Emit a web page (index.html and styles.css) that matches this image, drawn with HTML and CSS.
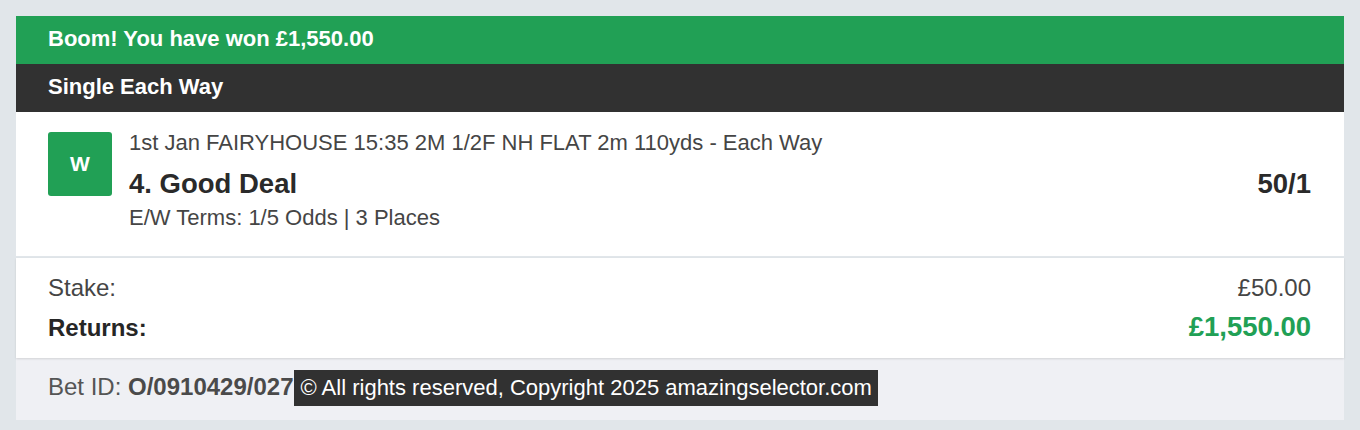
FILE: index.html
```html
<!DOCTYPE html>
<html lang="en">
<head>
<meta charset="utf-8">
<title>Bet receipt</title>
<link rel="stylesheet" href="styles.css">
</head>
<body>
<div class="card">
  <div class="banner">Boom! You have won £1,550.00</div>
  <div class="bet-type">Single Each Way</div>
  <div class="selection">
    <div class="badge">W</div>
    <div class="info">
      <div class="meta">1st Jan FAIRYHOUSE 15:35 2M 1/2F NH FLAT 2m 110yds - Each Way</div>
      <div class="name-row">
        <span class="name">4. Good Deal</span>
        <span class="odds">50/1</span>
      </div>
      <div class="terms">E/W Terms: 1/5 Odds | 3 Places</div>
    </div>
  </div>
  <div class="totals">
    <div class="row stake"><span>Stake:</span><span>£50.00</span></div>
    <div class="row returns"><span class="label">Returns:</span><span class="value">£1,550.00</span></div>
  </div>
  <div class="footer">
    <span class="bet-id">Bet ID: <b>O/0910429/027</b></span><span class="copyright">© All rights reserved, Copyright 2025 amazingselector.com</span>
  </div>
</div>
</body>
</html>
```
FILE: styles.css
```css
html, body {
  margin: 0;
  padding: 0;
}
body {
  background: #e1e6ea;
  padding: 16px;
  font-family: "Liberation Sans", Arial, sans-serif;
  color: #444;
}
.card {
  display: flex;
  flex-direction: column;
  width: 1328px;
}
.banner, .bet-type {
  height: 48px;
  box-sizing: border-box;
  padding: 0 32px 2px;
  line-height: 46px;
  font-size: 22px;
  font-weight: bold;
  color: #fff;
}
.banner {
  background: #21a055;
}
.bet-type {
  background: #313131;
}
.selection {
  display: flex;
  gap: 17px;
  height: 146px;
  box-sizing: border-box;
  padding: 20px 33px 0 32px;
  background: #fff;
  border-bottom: 2px solid #e1e6ea;
}
.badge {
  flex: none;
  width: 64px;
  height: 64px;
  border-radius: 3px;
  background: #21a055;
  color: #fff;
  font-weight: bold;
  font-size: 21px;
  display: flex;
  align-items: center;
  justify-content: center;
}
.info {
  flex: 1;
  display: flex;
  flex-direction: column;
}
.meta {
  font-size: 22px;
  line-height: 22px;
  color: #454545;
}
.name-row {
  margin-top: 14px;
  display: flex;
  justify-content: space-between;
  font-size: 27.5px;
  line-height: 32px;
  font-weight: bold;
  color: #2a2a2a;
}
.terms {
  margin-top: 5px;
  font-size: 22px;
  line-height: 26px;
  color: #454545;
}
.totals {
  background: #fff;
  padding: 17px 33px 14px 32px;
  box-shadow: 0 1px 2px rgba(0, 0, 0, 0.12);
  position: relative;
  z-index: 1;
}
.row {
  display: flex;
  justify-content: space-between;
  align-items: baseline;
}
.stake {
  font-size: 24px;
  line-height: 26px;
  color: #454545;
}
.returns {
  margin-top: 10px;
  line-height: 32px;
}
.returns .label {
  font-size: 24px;
  font-weight: bold;
  color: #262626;
}
.returns .value {
  font-size: 27.5px;
  font-weight: bold;
  color: #21a055;
}
.footer {
  background: #eff0f4;
  height: 62px;
  box-sizing: border-box;
  padding: 12px 32px 0;
  font-size: 24px;
  line-height: 26px;
  color: #555;
  overflow: hidden;
}
.bet-id b {
  color: #4a4a4a;
}
.copyright {
  display: inline-block;
  background: #313131;
  color: #fff;
  font-size: 22px;
  line-height: 24px;
  padding: 6px 6px 6px 7px;
}
```
